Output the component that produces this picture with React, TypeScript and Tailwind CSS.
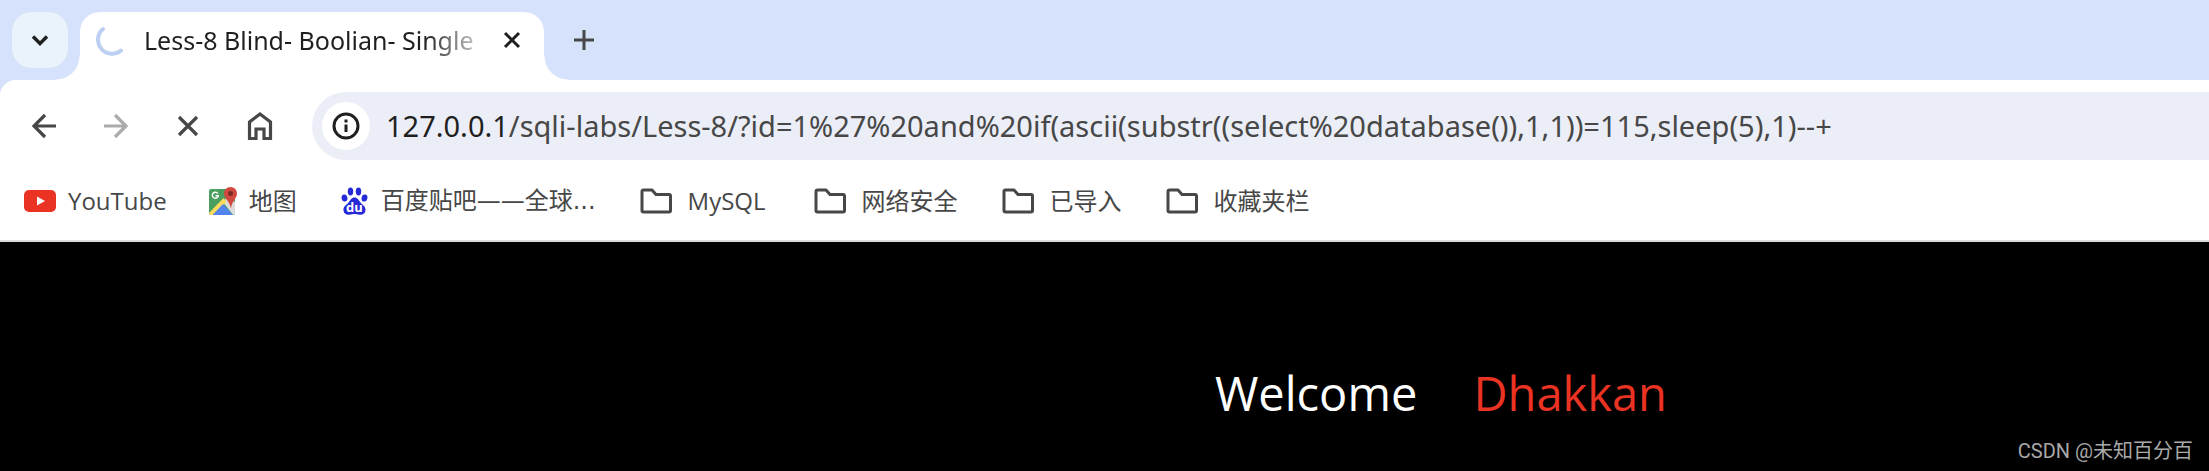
import type { ReactNode } from "react";

const bookmarks = [
  { label: "YouTube", icon: "youtube", spacing: "gap-3" },
  { label: "地图", icon: "maps", spacing: "gap-3 ml-[42px]" },
  { label: "百度贴吧——全球...", icon: "baidu", spacing: "gap-3 ml-11 font-['DejaVu_Sans','Noto_Sans_CJK_SC',sans-serif]" },
  { label: "MySQL", icon: "folder", spacing: "gap-4 ml-11" },
  { label: "网络安全", icon: "folder", spacing: "gap-4 ml-12" },
  { label: "已导入", icon: "folder", spacing: "gap-4 ml-11" },
  { label: "收藏夹栏", icon: "folder", spacing: "gap-4 ml-11" },
];

function YoutubeIcon() {
  return (
    <svg className="w-8 h-6" viewBox="0 0 32 24">
      <rect y="1" width="32" height="22" rx="5" fill="#ea3323" />
      <path d="M13 7.5v9l8-4.500z" fill="#fff" />
    </svg>
  );
}

function MapsIcon() {
  return (
    <svg className="w-7 h-7" viewBox="0 0 28 28">
      <rect y="2" width="26" height="26" rx="2" fill="#4a9f5e" />
      <path d="M26 15v11q0 2-2 2l-10-13 4-5z" fill="#dcdcdc" />
      <path d="M0 26L14.500 11l3 4L5 28H2q-2 0-2-2z" fill="#fbdc5c" />
      <path d="M3.500 28L14 17l10 11z" fill="#5383ec" />
      <path d="M21.500 0c4 0 6.500 3 6.500 6.500 0 5-5 7-6 15-1.500-8-7-10-7-15C15 3 17.500 0 21.500 0z" fill="#d1493e" />
      <circle cx="21.500" cy="6.500" r="2.500" fill="#7c2a26" />
      <path d="M8.800 6.500A3 3 0 1 0 9.300 8.800H6.500" fill="none" stroke="#fff" strokeWidth="1.400" />
    </svg>
  );
}

function BaiduIcon() {
  return (
    <svg className="w-7 h-7" viewBox="0 0 28 28" fill="#2529d8">
      <ellipse cx="3.500" cy="11" rx="2.900" ry="3.600" transform="rotate(-12 3.500 11)" />
      <ellipse cx="9.500" cy="4.500" rx="2.700" ry="4" />
      <ellipse cx="17.500" cy="4.500" rx="2.700" ry="4" />
      <ellipse cx="23.500" cy="11" rx="2.900" ry="3.600" transform="rotate(12 23.500 11)" />
      <path d="M13.500 10.500c3 0 4 2.500 6 5s5.500 4 5 8c-.500 3.500-3 4.500-6 4.200-2-.200-3-.700-5-.700s-3 .500-5 .700c-3 .300-5.500-.700-6-4.200-.500-4 3-5.500 5-8s3-5 6-5z" />
      <text x="5" y="25" fontSize="13" fontWeight="700" fill="#fff" fontFamily="Open Sans, sans-serif">du</text>
    </svg>
  );
}

function FolderIcon() {
  return (
    <svg className="w-8 h-7" viewBox="0 0 32 28" fill="none" stroke="#474747" strokeWidth="3" strokeLinejoin="round">
      <path d="M3.500 3h8.500l4 4.500h13q1.500 0 1.500 1.500v14.500q0 1.500-1.500 1.500h-25.500q-1.500 0-1.500-1.500v-19q0-1.500 1.500-1.500z" />
    </svg>
  );
}

function BookmarkIcon({ name }: { name: string }) {
  if (name === "youtube") return <YoutubeIcon />;
  if (name === "maps") return <MapsIcon />;
  if (name === "baidu") return <BaiduIcon />;
  return <FolderIcon />;
}

function ToolButton({ label, children, disabled }: { label: string; children: ReactNode; disabled?: boolean }) {
  return (
    <button
      aria-label={label}
      disabled={disabled}
      className={disabled ? "flex size-10 items-center justify-center text-[#ababab]" : "flex size-10 items-center justify-center text-[#474747]"}
    >
      <svg className="size-8" viewBox="0 0 32 32" fill="none" stroke="currentColor" strokeWidth="3.200">
        {children}
      </svg>
    </button>
  );
}

function TabStrip() {
  return (
    <div className="flex h-20 items-stretch bg-[#d6e1fb] pl-3">
      <button aria-label="Search tabs" className="mt-3 flex size-14 items-center justify-center rounded-[20px] bg-[#eaf2fc]">
        <svg className="size-6" viewBox="0 0 24 24" fill="none" stroke="#1f1f1f" strokeWidth="3.500">
          <path d="M5 8.500l7 7 7-7" />
        </svg>
      </button>

      {/* active tab */}
      <div className="relative ml-3 mt-3 flex w-[464px] items-center rounded-t-[20px] bg-white pb-3 pl-4">
        <span className="absolute bottom-0 right-full size-6 bg-[radial-gradient(circle_at_0_0,transparent_23px,white_24px)]" />
        <span className="absolute bottom-0 left-full size-6 bg-[radial-gradient(circle_at_100%_0,transparent_23px,white_24px)]" />
        <svg className="size-8" viewBox="0 0 32 32" fill="none" stroke="#bccff2" strokeWidth="4" strokeLinecap="round">
          <path d="M7 5A14 14 0 0 0 25 26.500" />
        </svg>
        <span className="ml-4 w-[332px] whitespace-nowrap pt-0.5 font-['Noto_Sans',sans-serif] text-[25px] text-[#1f1f1f] [mask-image:linear-gradient(to_right,black_280px,transparent_350px)]">
          Less-8 Blind- Boolian- Single
        </span>
        <button aria-label="Close tab" className="ml-5 flex size-8 items-center justify-center">
          <svg className="size-6" viewBox="0 0 24 24" fill="none" stroke="#1f1f1f" strokeWidth="3">
            <path d="M5 5l14 14M19 5L5 19" />
          </svg>
        </button>
      </div>

      <button aria-label="New tab" className="ml-5 mt-5 flex size-10 items-center justify-center">
        <svg className="size-6" viewBox="0 0 24 24" fill="none" stroke="#474747" strokeWidth="3">
          <path d="M12 2v20M2 12h20" />
        </svg>
      </button>
    </div>
  );
}

function Toolbar() {
  return (
    <div className="flex items-center bg-white pb-2 pl-6 pt-3">
      <div className="flex gap-8">
        <ToolButton label="Back">
          <path d="M28 16H5.500M17 5L6 16l11 11" />
        </ToolButton>
        <ToolButton label="Forward" disabled>
          <path d="M4 16h22.500M15 5l11 11-11 11" />
        </ToolButton>
        <ToolButton label="Stop">
          <path d="M7 7l18 18M25 7L7 25" />
        </ToolButton>
        <ToolButton label="Home">
          <path d="M5.500 28.500V12L16 4l10.500 8v16.500H20V19h-8v9.500z" />
        </ToolButton>
      </div>
      <div className="ml-8 flex h-[68px] flex-1 items-center rounded-l-full bg-[#ebeef7] pl-[10px]">
        <button aria-label="Site information" className="flex size-12 shrink-0 items-center justify-center rounded-full bg-white">
          <svg className="size-7" viewBox="0 0 28 28" fill="none" stroke="#1f1f1f" strokeWidth="3">
            <circle cx="14" cy="14" r="12" />
            <path d="M14 12.500V20M14 7.500v3" />
          </svg>
        </button>
        <p className="ml-4 whitespace-nowrap pb-px font-['Noto_Sans',sans-serif] text-[29px] text-[#474747]">
          <span className="text-[#1f1f1f]">127.0.0.1</span>
          /sqli-labs/Less-8/?id=1%27%20and%20if(ascii(substr((select%20database()),1,1))=115,sleep(5),1)--+
        </p>
      </div>
    </div>
  );
}

export default function App() {
  return (
    <div className="flex min-h-screen flex-col bg-black font-['Open_Sans','Noto_Sans_CJK_SC',sans-serif]">
      <TabStrip />
      <div className="bg-[#d6e1fb]">
        <div className="overflow-hidden rounded-tl-2xl bg-white">
          <Toolbar />
          <nav className="flex h-[74px] items-center border-b-2 border-[#dadce0] pb-1.5 pl-6">
            {bookmarks.map((b) => (
              <a key={b.label} href="#" className={`flex items-center whitespace-nowrap text-2xl text-[#474747] ${b.spacing}`}>
                <BookmarkIcon name={b.icon} />
                {b.label}
              </a>
            ))}
          </nav>
        </div>
      </div>

      <main className="flex flex-1 flex-col justify-between">
        <h1 className="ml-[55%] mt-29 whitespace-nowrap text-[47px] text-white">
          Welcome <span className="ml-11 text-[#ea3323]">Dhakkan</span>
        </h1>
        <p className="mb-1.5 mr-4 self-end font-['Roboto','Noto_Sans_CJK_SC',sans-serif] text-xl text-[#a9a9a9]">
          CSDN @未知百分百
        </p>
      </main>
    </div>
  );
}
